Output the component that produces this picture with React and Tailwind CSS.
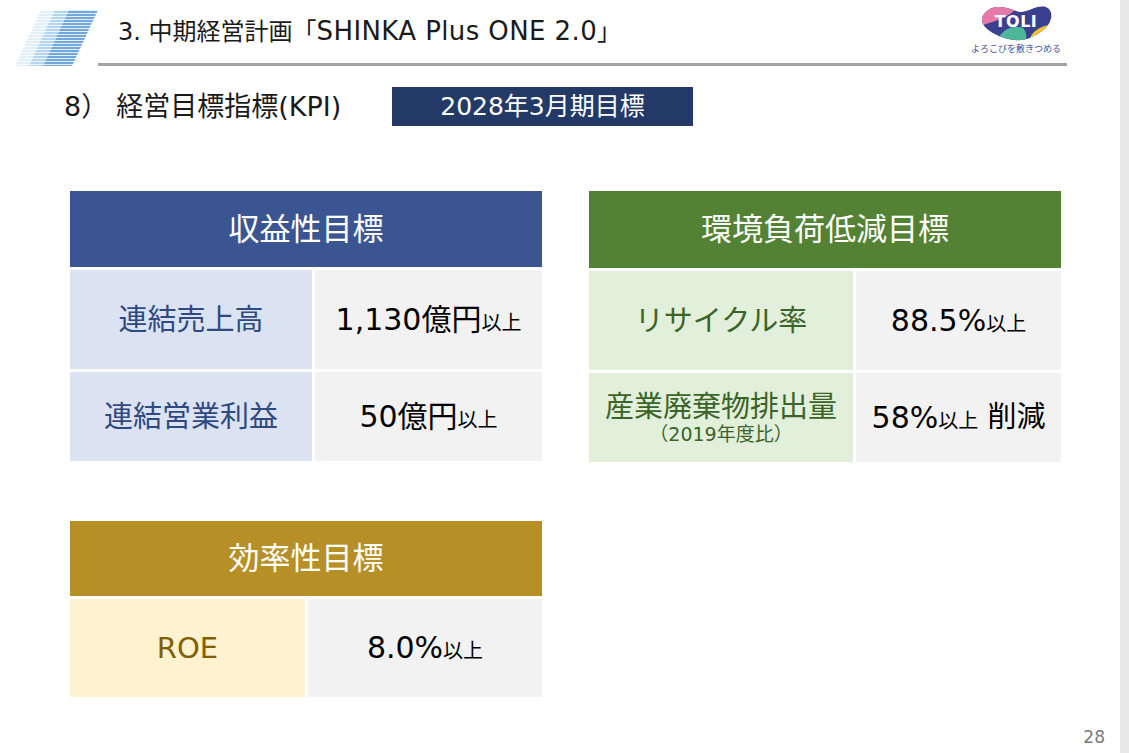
import React from 'react'

const tables = {
  profit: {
    title: '収益性目標',
    head: 'bg-[#3b5593]',
    label: 'bg-[#dbe2f1] text-[#2e4a80]',
    cols: 'grid-cols-[242px_227px]',
    rows: [
      { h: 'h-[99px]', label: '連結売上高', value: '1,130億円', unit: '以上' },
      { h: 'h-[89px]', label: '連結営業利益', value: '50億円', unit: '以上' },
    ],
  },
  env: {
    title: '環境負荷低減目標',
    head: 'bg-[#548235]',
    label: 'bg-[#e2efda] text-[#3b6428]',
    cols: 'grid-cols-[264px_205px]',
    rows: [
      { h: 'h-[99px]', label: 'リサイクル率', value: '88.5%', unit: '以上' },
      { h: 'h-[89px]', label: '産業廃棄物排出量', sub: '（2019年度比）', value: '58%', unit: '以上', tail: ' 削減' },
    ],
  },
  eff: {
    title: '効率性目標',
    head: 'bg-[#b78f27]',
    label: 'bg-[#fff2d1] text-[#7f6000]',
    cols: 'grid-cols-[235px_234px]',
    rows: [{ h: 'h-[98px]', label: 'ROE', value: '8.0%', unit: '以上' }],
  },
}

function KpiTable({ t, headH = 'h-[76px]' }) {
  return (
    <div className="w-[472px] flex flex-col gap-[3px]">
      <div className={`${headH} ${t.head} flex items-center justify-center text-white text-[31px] leading-none`}>
        {t.title}
      </div>
      {t.rows.map((r) => (
        <div key={r.label} className={`grid ${t.cols} gap-[3px] ${r.h}`}>
          <div className={`${t.label} flex flex-col items-center justify-center`}>
            <span className="text-[29px] leading-[30px]">{r.label}</span>
            {r.sub && <span className="text-[19px] leading-[20px] mt-[2px]">{r.sub}</span>}
          </div>
          <div className="bg-[#f2f2f2] flex items-center justify-center text-black">
            <span className="text-[30px] leading-none">{r.value}</span>
            <span className="text-[20px] leading-none mt-[6px]">{r.unit}</span>
            {r.tail && <span className="text-[29px] leading-none whitespace-pre">{r.tail}</span>}
          </div>
        </div>
      ))}
    </div>
  )
}

function Stripes() {
  return (
    <svg width="84" height="56" viewBox="0 0 84 56" className="shrink-0">
      <defs>
        <pattern id="hl" width="4" height="3" patternUnits="userSpaceOnUse">
          <rect width="4" height="1" fill="#ffffff" />
        </pattern>
      </defs>
      <polygon points="27,0 41,0 15,56 1,56" fill="#e1eff9" />
      <polygon points="41,0 55,0 29,56 15,56" fill="#b3d5f0" />
      <polygon points="55,0 84,0 58,56 29,56" fill="#73a9da" />
      <rect width="84" height="56" fill="url(#hl)" opacity="0.8" />
    </svg>
  )
}

function Logo() {
  return (
    <div className="flex flex-col items-center mt-[4px]">
      <svg width="74" height="37" viewBox="0 0 74 37">
        <defs>
          <clipPath id="blob">
            <path d="M7 8 C14 0 28 3 37 7 C47 11 56 0 67 3 C76 7 73 20 63 27 C53 34 45 37 36 36 C25 35 15 31 7 24 C1 18 2 12 7 8 Z" />
          </clipPath>
        </defs>
        <g clipPath="url(#blob)">
          <rect width="74" height="37" fill="#3a3f8f" />
          <path d="M0 0 L40 0 C36 10 22 16 0 22 Z" fill="#e57aa9" />
          <path d="M18 37 C22 26 34 20 44 24 C48 28 48 34 46 37 Z" fill="#4cb79a" />
          <path d="M50 37 C52 28 60 22 74 20 L74 37 Z" fill="#f2c230" />
        </g>
        <text x="37" y="23" textAnchor="middle" fill="#ffffff" fontSize="16" fontWeight="900" letterSpacing="0.5" fontFamily="'DejaVu Sans', sans-serif">TOLI</text>
      </svg>
      <span className="text-[9px] leading-none text-[#4b4f9e] mt-[4px]">よろこびを敷きつめる</span>
    </div>
  )
}

export default function App() {
  return (
    <div className="w-[1129px] h-[753px] flex bg-white font-['DejaVu_Sans','Noto_Sans_CJK_JP',sans-serif] overflow-hidden">
      <div className="w-[1120px] h-full flex flex-col">
        {/* header */}
        <div className="flex items-start">
          <div className="ml-[14px] mt-[10px]">
            <Stripes />
          </div>
          <div className="w-[969px] flex flex-col">
            <div className="h-[63px] flex items-start justify-between">
              <h1 className="pl-[20px] mt-[16px] text-[24px] leading-[30px] text-[#1a1a1a]">
                3.&nbsp;中期経営計画「<span className="text-[26px] tracking-[0.4px]">SHINKA Plus ONE 2.0</span>」
              </h1>
              <div className="mr-[6px]">
                <Logo />
              </div>
            </div>
            <div className="h-[3px] bg-[#a3a3a3]" />
          </div>
        </div>

        {/* sub header */}
        <div className="mt-[21px] flex items-center h-[39px]">
          <h2 className="ml-[64px] w-[328px] text-[27px] leading-none text-[#1a1a1a]">
            8）<span className="ml-[8px]">経営目標指標(KPI)</span>
          </h2>
          <div className="w-[301px] h-[39px] bg-[#243a66] flex items-center justify-center text-white text-[25px] leading-none">
            2028年3月期目標
          </div>
        </div>

        {/* tables */}
        <div className="mt-[65px] ml-[70px] flex flex-col gap-[59px]">
          <div className="flex gap-[47px]">
            <KpiTable t={tables.profit} />
            <KpiTable t={tables.env} headH="h-[77px]" />
          </div>
          <KpiTable t={tables.eff} headH="h-[75px]" />
        </div>

        <div className="mt-auto mb-[7px] pr-[15px] text-right text-[17px] leading-none text-[#7a7a7a]">28</div>
      </div>
      <div className="w-[9px] h-full bg-[#e8e8e8]" />
    </div>
  )
}
